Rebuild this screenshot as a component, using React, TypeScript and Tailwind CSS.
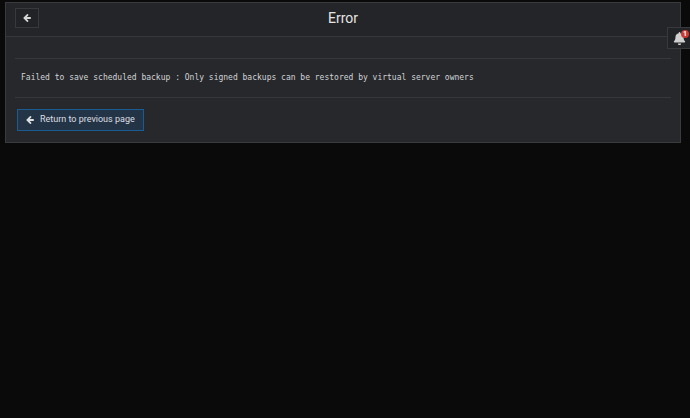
import React from "react";
import { FaBell } from "react-icons/fa";

const ArrowLeft = () => {
  return (
    <svg
      viewBox="0 -80 1536 1568"
      fill="currentColor"
      aria-hidden="true"
      className="size-2"
    >
      <path d="M1536 640v128q0 53-32.5 90.5t-84.5 37.5h-704l293 294q38 36 38 90t-38 90l-75 76q-37 37-90 37-52 0-91-37l-651-652q-37-37-37-90 0-52 37-91l651-650q38-38 91-38 52 0 90 38l75 74q38 38 38 91t-38 91l-293 293h704q52 0 84.5 37.5t32.5 90.5z" />
    </svg>
  );
};

const BackButton = () => {
  return (
    <button
      type="button"
      aria-label="Go back"
      className="flex h-5 w-6 items-center justify-center border border-[#37393d] bg-[#222327] text-[#d6d6d6]"
    >
      <ArrowLeft />
    </button>
  );
};

const ReturnButton = ({ label }: { label: string }) => {
  return (
    <button
      type="button"
      className="flex h-[22px] items-center gap-[6px] border border-[#1b5b93] bg-[#243447] px-2 text-[9px] text-[#dcdfe2]"
    >
      <ArrowLeft />
      <span>{label}</span>
    </button>
  );
};

const NotificationButton = ({ count }: { count: number }) => {
  return (
    <button
      type="button"
      aria-label="Notifications"
      className="fixed top-[27px] right-0 flex h-[22px] w-[23px] items-center justify-center border border-r-0 border-[#37393d] bg-[#222327] text-[#d0d0d0]"
    >
      <FaBell className="size-[13px]" />
      <span className="absolute top-[2px] right-[1px] flex size-2 items-center justify-center rounded-full bg-[#c93a35] text-[7px] leading-none font-bold text-white">
        {count}
      </span>
    </button>
  );
};

const App = () => {
  return (
    <div className="min-h-screen bg-[#0a0a0a] pt-[2px] pr-[9px] pl-[5px] font-['Roboto',sans-serif]">
      <main className="border border-[#3a3b3f] bg-[#27282c]">
        <header className="grid h-[34px] grid-cols-[24px_1fr_24px] items-center border-b border-[#37383c] bg-[#242529] px-[9px] pb-1">
          <BackButton />
          <h1 className="text-center text-[14px] leading-4 text-[#e4e4e4]">
            Error
          </h1>
        </header>
        <section className="px-[9px] pt-[21px] pb-[11px]">
          <p className="border-y border-[#37383c] px-[6px] py-[13px] font-['DejaVu_Sans_Mono',monospace] text-[8px] leading-3 text-[#d2d4d6]">
            Failed to save scheduled backup : Only signed backups can be
            restored by virtual server owners
          </p>
          <div className="mt-[11px] pl-[2px]">
            <ReturnButton label="Return to previous page" />
          </div>
        </section>
      </main>
      <NotificationButton count={1} />
    </div>
  );
};

export default App;
